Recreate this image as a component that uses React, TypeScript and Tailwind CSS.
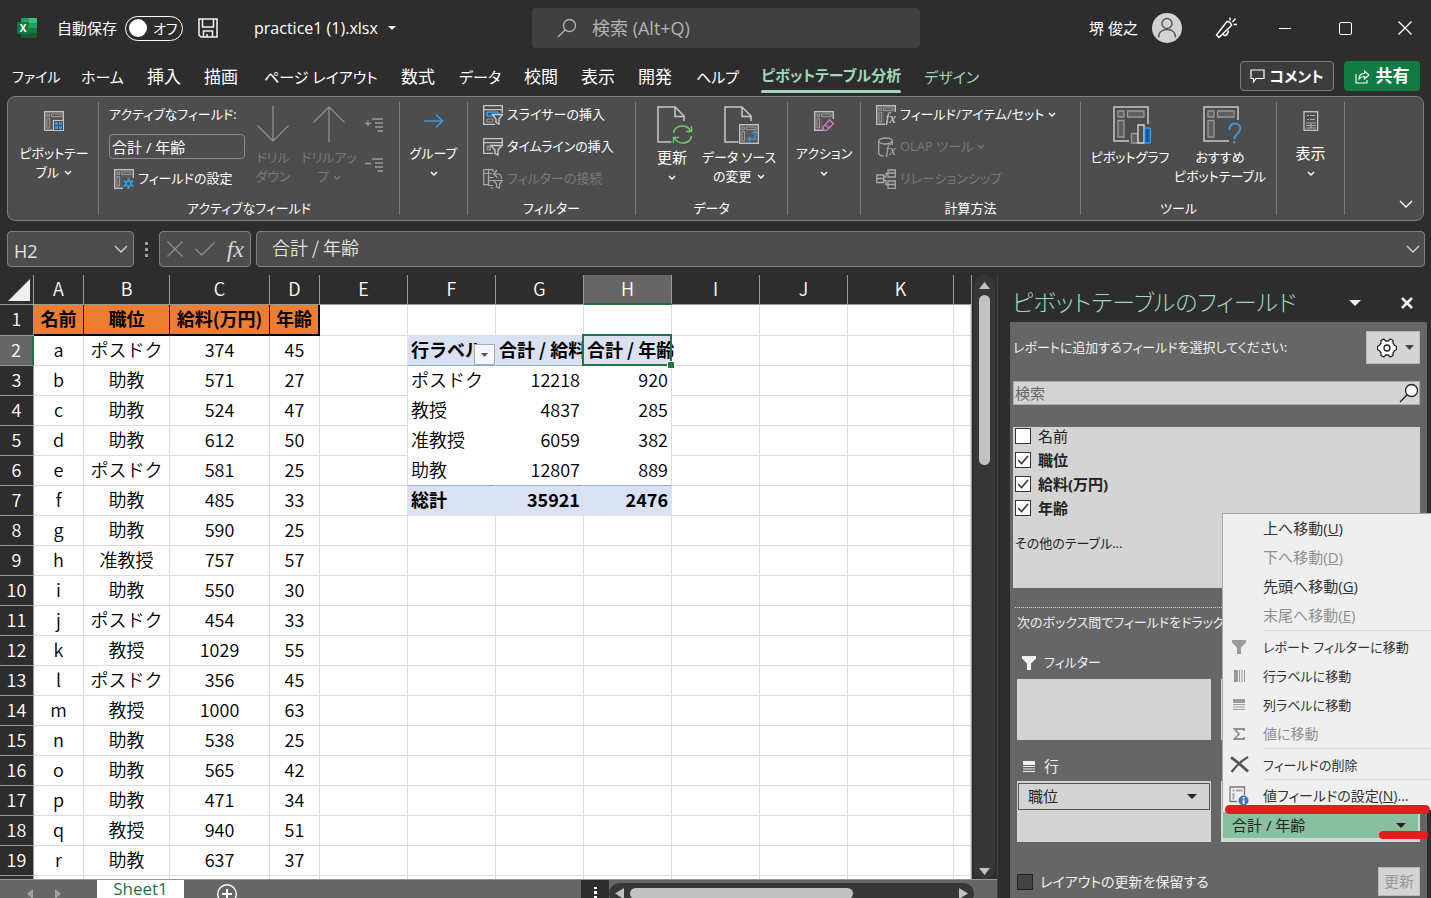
import type { ReactNode } from "react";

const SHEET_FONT = "font-['Noto_Sans_CJK_JP',sans-serif]";

/* ---------- icons ---------- */

function Chevron({ className = "" }: { className?: string }) {
  return (
    <svg width="8" height="6" viewBox="0 0 8 6" fill="none" className={`inline-block shrink-0 ${className}`}>
      <path d="M1 1l3 3 3-3" stroke="currentColor" strokeWidth="1.4" />
    </svg>
  );
}

function WideChevron() {
  return (
    <svg width="14" height="8" viewBox="0 0 14 8" fill="none">
      <path d="M1 1l6 6 6-6" stroke="currentColor" strokeWidth="1.3" />
    </svg>
  );
}

function Triangle({ w = 10, h = 5 }: { w?: number; h?: number }) {
  return (
    <svg width={w} height={h} viewBox="0 0 10 5" preserveAspectRatio="none">
      <path d="M0 0h10L5 5z" fill="currentColor" />
    </svg>
  );
}

function ExcelLogo() {
  return (
    <svg width="20" height="20" viewBox="0 0 20 20">
      <path d="M5 0h14a1 1 0 0 1 1 1v4H4V1a1 1 0 0 1 1-1z" fill="#21a366" />
      <path d="M12 0h7a1 1 0 0 1 1 1v4h-8z" fill="#33c481" />
      <path d="M4 5h8v5H4z" fill="#107c41" />
      <path d="M12 5h8v5h-8z" fill="#21a366" />
      <path d="M4 10h8v5H4zM4 15h16v4a1 1 0 0 1-1 1H5a1 1 0 0 1-1-1z" fill="#185c37" />
      <path d="M12 10h8v5h-8z" fill="#107c41" />
      <rect x="0" y="4" width="12" height="12" rx="1" fill="#107c41" />
      <text x="6" y="13.6" fontSize="10" fontWeight="700" textAnchor="middle" fill="#fff" fontFamily="Open Sans, sans-serif">X</text>
    </svg>
  );
}

function SaveIcon() {
  return (
    <svg width="20" height="20" viewBox="0 0 20 20" fill="none" stroke="#f4f4f4" strokeWidth="1.5">
      <path d="M1 1h18v18H3l-2-2zM4.500 1v8h11V1M5.500 19v-6h9v6M9 19v-3" />
    </svg>
  );
}

function Magnifier({ size = 20, fill = "none" }: { size?: number; fill?: string }) {
  return (
    <svg width={size} height={size} viewBox="0 0 20 20" fill="none" stroke="currentColor" strokeWidth="1.3">
      <circle cx="12.500" cy="7.500" r="6" fill={fill} />
      <path d="M8.200 11.800L1 19" />
    </svg>
  );
}

function PivotBase() {
  return (
    <>
      <rect x=".7" y=".7" width="18.600" height="18.600" fill="#5a5a5a" stroke="#c8c8c8" strokeWidth="1.3" />
      <path d="M3 3h2.500v2.500H3zM7.500 3H17v2.500H7.500zM3 7.500h2.500V17H3z" stroke="#9a9a9a" fill="none" />
    </>
  );
}

function PivotIcon({ children }: { children?: ReactNode }) {
  return (
    <svg width="20" height="20" viewBox="0 0 20 20" className="shrink-0">
      <PivotBase />
      {children}
    </svg>
  );
}

function PivotTableIcon() {
  return (
    <PivotIcon>
      <rect x="9.500" y="9.500" width="10" height="10" fill="#4d4d4d" stroke="#c8c8c8" />
      <path d="M11 11h3v3h-3zM15 11h3v3h-3zM11 15h3v3h-3zM15 15h3v3h-3z" fill="#3a96dd" />
    </PivotIcon>
  );
}

function FieldSettingsIcon() {
  return (
    <PivotIcon>
      <rect x="9" y="9" width="11" height="11" fill="#4d4d4d" />
      <g stroke="#3a96dd" strokeWidth="2.200">
        <path d="M14.500 9v11M9.700 11.800l9.600 5.500M9.700 17.300l9.600-5.500" />
      </g>
      <circle cx="14.500" cy="14.500" r="3.300" fill="#3a96dd" />
      <circle cx="14.500" cy="14.500" r="1.500" fill="#4d4d4d" />
    </PivotIcon>
  );
}

function EraserPivotIcon() {
  return (
    <PivotIcon>
      <rect x="9" y="8" width="11" height="12" fill="#4d4d4d" />
      <path d="M8.500 16.500l7-7.500 4 3.500-7 7H10z" fill="#4d4d4d" stroke="#d479d4" strokeWidth="1.400" />
      <path d="M11.300 13.800l4 3.500" stroke="#d479d4" strokeWidth="1.400" />
    </PivotIcon>
  );
}

function SlicerIcon() {
  return (
    <svg width="20" height="20" viewBox="0 0 20 20" fill="none" className="shrink-0">
      <path d="M.7.700h18.600v4H.7zM.7 4.700v14.600H12M19.300 4.700V8" stroke="#c8c8c8" strokeWidth="1.300" />
      <path d="M4 7h11v4H4z" fill="#0063b1" stroke="#69afe5" />
      <path d="M4 14h6v3H4z" stroke="#9a9a9a" />
      <path d="M9.500 9.500h10l-3.500 4.500v5l-3-1.500V14z" fill="#4d4d4d" stroke="#d0d0d0" strokeWidth="1.300" />
    </svg>
  );
}

function TimelineIcon() {
  return (
    <svg width="20" height="20" viewBox="0 0 20 20" fill="none" className="shrink-0">
      <path d="M.7 1.700h18.600v4H.7zM.7 5.700v10.600H10M19.300 5.700V9" stroke="#c8c8c8" strokeWidth="1.300" />
      <path d="M4 9h3.500v4H4z" stroke="#9a9a9a" fill="#777" />
      <path d="M8 8.500h11l-4 4.500v5l-3-1.500V13z" fill="#4d4d4d" stroke="#d0d0d0" strokeWidth="1.300" />
    </svg>
  );
}

function FilterLinkIcon() {
  return (
    <svg width="20" height="20" viewBox="0 0 20 20" fill="none" stroke="#a8a8a8" strokeWidth="1.200" className="shrink-0">
      <path d="M10 3V.700H.700v15H5M.700 4.500H9M5.500.700v15" />
      <path d="M5.500 8.500h5M5.500 8.500v8h4.500M5.500 11.500h4M7.500 19h3" />
      <path d="M10.500 5l3.500-4M10.500 5l4 3.500M10.500 5h4c3 0 4 2 4 5" />
      <path d="M10.500 11.500h9l-3 3.500v4l-3-1v-3z" fill="#4d4d4d" />
    </svg>
  );
}

function PageShape() {
  return <path d="M14.500 36H1V1h17l9 9v5M18 1v9.500h9" stroke="#c8c8c8" strokeWidth="1.500" fill="none" />;
}

function RefreshIcon() {
  return (
    <svg width="36" height="38" viewBox="0 0 36 38" fill="none">
      <PageShape />
      <path d="M16.500 27c1-5 5-7 9-7 3.500 0 6.500 2 8 5M34.500 20v5.500H29M34.500 30c-1 5-5 7-9 7-3.500 0-6.500-2-8-5M16.500 37v-5.500H22" stroke="#6ccb6c" strokeWidth="1.500" />
    </svg>
  );
}

function DataSourceIcon() {
  return (
    <svg width="36" height="38" viewBox="0 0 36 38" fill="none">
      <PageShape />
      <g transform="translate(15 18)">
        <PivotBase />
        <path d="M9 15h7V8M13.500 9.500L16 7l2.500 2.500M11.500 12.500L9 15l2.500 2.500" stroke="#3a96dd" strokeWidth="1.400" fill="none" />
      </g>
    </svg>
  );
}

function PivotChartIcon() {
  return (
    <svg width="38" height="38" viewBox="0 0 38 38">
      <path d="M16 35H1V1h34v17" stroke="#c8c8c8" strokeWidth="1.500" fill="none" />
      <path d="M5 5h6v6H5zM14.500 5H31v6H14.500zM5 14.500h6V31H5z" stroke="#9a9a9a" strokeWidth="1.300" fill="#5f5f5f" />
      <path d="M18.500 27.500H25V37h-6.500z" fill="#5f5f5f" stroke="#9a9a9a" strokeWidth="1.300" />
      <path d="M25 19h6v18h-6z" fill="#4d4d4d" stroke="#d8d8d8" strokeWidth="1.300" />
      <path d="M31.700 22h5.600v15h-5.600z" fill="#0063b1" stroke="#69afe5" />
    </svg>
  );
}

function RecommendedPivotIcon() {
  return (
    <svg width="38" height="38" viewBox="0 0 38 38" fill="none">
      <path d="M26 35H1V1h34v13" stroke="#c8c8c8" strokeWidth="1.500" />
      <path d="M5 5h6v6H5zM14.500 5H31v6H14.500zM5 14.500h6V31H5z" stroke="#9a9a9a" strokeWidth="1.300" fill="#5f5f5f" />
      <path d="M26.500 24c0-4 2-6.500 5.500-6.500s5.300 2.500 5.300 5c0 5-6 5-6 11" stroke="#3a96dd" strokeWidth="2" />
      <path d="M30.200 35h2.200v2.500h-2.200z" fill="#3a96dd" />
    </svg>
  );
}

function CalcFieldIcon() {
  return (
    <PivotIcon>
      <rect x="9" y="7" width="11" height="13" fill="#4d4d4d" />
      <text x="9.500" y="17.500" fontSize="14" fontStyle="italic" fill="#d8d8d8" fontFamily="Liberation Serif, serif">fx</text>
    </PivotIcon>
  );
}

function OlapIcon() {
  return (
    <svg width="20" height="20" viewBox="0 0 20 20" fill="none" className="shrink-0">
      <path d="M2.700 4v12.500c0 1.500 3 2.500 5 2.500M16.300 4v4" stroke="#a8a8a8" strokeWidth="1.300" />
      <ellipse cx="9.500" cy="4" rx="6.800" ry="3" stroke="#a8a8a8" strokeWidth="1.300" />
      <text x="9.500" y="17.500" fontSize="14" fontStyle="italic" fill="#b0b0b0" fontFamily="Liberation Serif, serif">fx</text>
    </svg>
  );
}

function RelationIcon() {
  return (
    <svg width="20" height="20" viewBox="0 0 20 20" fill="none" stroke="#a8a8a8" strokeWidth="1.300" className="shrink-0">
      <path d="M.7 6h7v7.500h-7zM12 1h7.300v7H12zM12 12h7.300v7.300H12zM.7 9.500h7M12 4h7.300M12 15.500h7.300M7.700 8H10V4.500h2M7.700 11.500H10v4h2" />
    </svg>
  );
}

function ArrowBig({ up = false }: { up?: boolean }) {
  return (
    <svg width="32" height="36" viewBox="0 0 32 36" fill="none" stroke="#8a8a8a" strokeWidth="1.400" className={up ? "rotate-180" : ""}>
      <path d="M16 0v35M.5 19.500L16 35l15.500-15.500" />
    </svg>
  );
}

function IndentIcon({ plus = false }: { plus?: boolean }) {
  return (
    <svg width="18" height="14" viewBox="0 0 18 14" fill="none" stroke="#9a9a9a" strokeWidth="1.300">
      <path d="M7 1h11M10 5h8M10 9h8M12.500 13H18M0 5.500h6" />
      {plus && <path d="M3 2.500v6" />}
    </svg>
  );
}

function ArrowRight() {
  return (
    <svg width="20" height="14" viewBox="0 0 20 14" fill="none" stroke="#3a96dd" strokeWidth="1.600">
      <path d="M0 7h18.500M12 .5L18.500 7 12 13.500" />
    </svg>
  );
}

function DisplayIcon() {
  return (
    <svg width="16" height="20" viewBox="0 0 16 20" fill="none">
      <rect x="1" y=".7" width="13.600" height="18.600" stroke="#c8c8c8" strokeWidth="1.300" />
      <path d="M4 4.500h2M7 4.500h5M4 8.500h2M7 8.500h5M3 12h10M3 14.500h10M3 17h10M8 12v5" stroke="#b0b0b0" strokeWidth="1.100" />
    </svg>
  );
}

function PenIcon() {
  return (
    <svg width="22" height="22" viewBox="0 0 22 22" fill="none" stroke="#fff" strokeWidth="1.400">
      <path d="M1.500 18L12 4.500c2 0 4 1.500 4.500 4L4 20.500zM8 17c1.500 2.500 4.500 2 5.500-3.500M15 3.500V.500M17.500 5l3-3.500M18.500 7.500H22" />
    </svg>
  );
}

function PersonIcon() {
  return (
    <svg width="20" height="22" viewBox="0 0 20 22" fill="none" stroke="#555" strokeWidth="1.500">
      <circle cx="10" cy="6.500" r="5" />
      <path d="M1.500 20.500c0-5 3.500-8 8.500-8s8.500 3 8.500 8" />
    </svg>
  );
}

function GearIcon() {
  return (
    <svg width="20" height="20" viewBox="0 0 20 20" fill="#fff" stroke="#222" strokeWidth="1.300" strokeLinejoin="round">
      <path d="M6 1.200l1.500.3L8.500 3h3l1-1.500 1.500-.3 2 1.300v2.300L17.500 7.300l2 1.200v3l-2 1.200-1.500 2.500v2.300l-2 1.300-1.500-.3-1-1.500h-3l-1 1.500-1.500.3-2-1.300v-2.300l-1.500-2.500-2-1.200v-3l2-1.200L4 4.800V2.500z" />
      <circle cx="10" cy="10" r="3" />
    </svg>
  );
}

function FunnelSolid() {
  return (
    <svg width="14" height="14" viewBox="0 0 14 14" fill="currentColor">
      <path d="M0 0h14v2.500L9 7.500V14H5V7.500L0 2.500z" />
    </svg>
  );
}

function RowsIcon() {
  return (
    <svg width="12" height="11" viewBox="0 0 12 11" fill="currentColor">
      <path d="M0 0h12v4H0zM0 5h12v1H0zM0 7.500h12v1H0zM0 10h12v1H0z" />
    </svg>
  );
}

function ColumnsIcon() {
  return (
    <svg width="11" height="12" viewBox="0 0 11 12" fill="currentColor">
      <path d="M0 0h4v12H0zM5 0h1v12H5zM7.500 0h1v12h-1zM10 0h1v12h-1z" />
    </svg>
  );
}

function SigmaIcon() {
  return (
    <svg width="12" height="12" viewBox="0 0 12 12" fill="none" stroke="currentColor" strokeWidth="1.800">
      <path d="M11 3V1H1.500L6 6l-4.500 5H11V9" />
    </svg>
  );
}

function DeleteIcon() {
  return (
    <svg width="19" height="17" viewBox="0 0 19 17" fill="none" stroke="#555">
      <path d="M1 1.500C6 4.500 12 10 18 15.500" strokeWidth="2.800" />
      <path d="M18 1C12 4.500 6 10 1.500 16" strokeWidth="2.200" />
    </svg>
  );
}

function ValueSettingsIcon() {
  return (
    <svg width="20" height="20" viewBox="0 0 20 20" fill="none">
      <path d="M8 15.500H1V1h14.500v8" stroke="#777" strokeWidth="1.300" />
      <path d="M3.500 3.500h2v2h-2zM7 3.500h6.500v2H7zM3.500 7h2v6.500h-2z" fill="#aaa" />
      <circle cx="14.500" cy="14.500" r="5" fill="#3f76b5" />
      <path d="M13.700 11h1.800v1.500h-1.800zM13.700 13.500h1.800v4.500h-1.800z" fill="#fff" />
    </svg>
  );
}

/* ---------- title bar and tabs ---------- */

function TitleBar() {
  return (
    <header className="grid h-14 shrink-0 grid-cols-[532px_1fr_511px] items-center">
      <div className="flex items-center pl-[17px]">
        <ExcelLogo />
        <span className="ml-5 text-[15px]">自動保存</span>
        <button type="button" role="switch" aria-checked="false" className="ml-2 flex h-[25px] w-[58px] items-center rounded-full border-[1.5px] border-white pl-[3px] text-[14px]">
          <span className="h-[18px] w-[18px] rounded-full bg-white" />
          <span className="ml-1.5">オフ</span>
        </button>
        <button type="button" aria-label="保存" className="ml-[15px]"><SaveIcon /></button>
        <button type="button" className="ml-9 flex items-center gap-2.5 text-[16px]">
          practice1 (1).xlsx
          <Triangle w={8} h={4} />
        </button>
      </div>
      <label className="flex h-10 items-center gap-[15px] rounded bg-[#404040] pl-[25px] text-[#b4b4b4]">
        <Magnifier />
        <input placeholder="検索 (Alt+Q)" aria-label="検索" className="min-w-0 flex-1 bg-transparent text-[18px] outline-none placeholder:text-[#b4b4b4]" />
      </label>
      <div className="flex items-center justify-end">
        <span className="text-[15px]">堺 俊之</span>
        <button type="button" aria-label="アカウント" className="ml-3.5 mr-[15px] grid h-[30px] w-[30px] place-items-center rounded-full bg-[#d2d2d2]"><PersonIcon /></button>
        <button type="button" aria-label="ペン" className="grid w-[58px] place-items-center"><PenIcon /></button>
        <button type="button" aria-label="最小化" className="grid h-10 w-[60px] place-items-center"><span className="h-px w-3 bg-white" /></button>
        <button type="button" aria-label="最大化" className="grid h-10 w-[60px] place-items-center"><span className="h-[13px] w-[13px] rounded-xs border-[1.5px] border-white" /></button>
        <button type="button" aria-label="閉じる" className="grid h-10 w-14 place-items-center pl-1">
          <svg width="14" height="14" viewBox="0 0 14 14" stroke="#fff" strokeWidth="1.400"><path d="M.5.500l13 13M13.500.500l-13 13" /></svg>
        </button>
      </div>
    </header>
  );
}

const tabs = [
  { label: "ファイル", style: "w-[69px] text-[14px]" },
  { label: "ホーム", style: "w-[66px] text-[15px]" },
  { label: "挿入", style: "w-[57px] text-[17px]" },
  { label: "描画", style: "w-[60px] text-[17px]" },
  { label: "ページ レイアウト", style: "w-[137px] text-[15px]" },
  { label: "数式", style: "w-[58px] text-[17px]" },
  { label: "データ", style: "w-[65px] text-[15px]" },
  { label: "校閲", style: "w-[57px] text-[17px]" },
  { label: "表示", style: "w-[57px] text-[17px]" },
  { label: "開発", style: "w-[58px] text-[17px]" },
  { label: "ヘルプ", style: "w-[65px] text-[15px]" },
];

function Tabs() {
  return (
    <nav className="flex h-10 shrink-0 items-center pl-3 pr-[11px] text-[15px] leading-6 whitespace-nowrap">
      {tabs.map((t) => (
        <a key={t.label} href="#" className={`${t.style} shrink-0 pt-0.5`}>{t.label}</a>
      ))}
      <a href="#" className="mr-[23px] flex h-[34px] flex-col justify-between pt-1 font-bold text-[#9fd8b9]">
        ピボットテーブル分析
        <span className="h-[3px] rounded-full bg-[#9fd8b9]" />
      </a>
      <a href="#" className="pt-0.5 text-[#9fd8b9]">デザイン</a>
      <div className="ml-auto flex gap-2.5 font-bold">
        <button type="button" className="flex h-[30px] w-[94px] items-center justify-center gap-1 rounded border border-[#808080] bg-[#3c3c3c] text-[15px]">
          <svg width="15" height="14" viewBox="0 0 15 14" fill="none" stroke="#fff" strokeWidth="1.200"><path d="M1 1h13v8.500H6L3.500 13V9.500H1z" /></svg>
          コメント
        </button>
        <button type="button" className="flex h-[30px] w-[76px] items-center justify-center gap-1.5 rounded bg-[#107c41] text-[17px]">
          <svg width="15" height="15" viewBox="0 0 15 15" fill="none" stroke="#fff" strokeWidth="1.100"><path d="M1 5v9h11v-3M4 10c0-4 2-5.500 5.500-5.500V2L14 6l-4.500 4V7.500C7 7.500 5.500 8 4 10z" /></svg>
          共有
        </button>
      </div>
    </nav>
  );
}

/* ---------- ribbon ---------- */

function Group({ label, width, children }: { label?: string; width: string; children: ReactNode }) {
  return (
    <section className={`${width} my-[5px] flex shrink-0 flex-col border-r border-[#7a7a7a]`}>
      <div className="flex flex-1">{children}</div>
      <div className="h-3.5 text-center text-[13px] leading-[14px]">{label}</div>
    </section>
  );
}

function SmallIconButton({ icon, children, width }: { icon: ReactNode; children: ReactNode; width: string }) {
  return (
    <button type="button" className={`${width} flex flex-col items-center text-center text-[13px] leading-[19px]`}>
      <span className="mb-1 grid h-[38px] place-items-center">{icon}</span>
      {children}
    </button>
  );
}

function LargeIconButton({ icon, children, width, disabled }: { icon: ReactNode; children: ReactNode; width: string; disabled?: boolean }) {
  return (
    <button type="button" disabled={disabled} className={`${width} flex shrink-0 flex-col items-center pt-1 text-center text-[13px] leading-[19px] disabled:text-[#787878]`}>
      <span className="mb-1 flex h-[38px] items-start">{icon}</span>
      {children}
    </button>
  );
}

function Command({ icon, children, disabled }: { icon: ReactNode; children: ReactNode; disabled?: boolean }) {
  return (
    <button type="button" disabled={disabled} className="flex h-5 items-center gap-1 text-[13px] disabled:text-[#787878]">
      {icon}
      {children}
    </button>
  );
}

function Ribbon() {
  return (
    <div className="mx-[7px] flex h-[125px] shrink-0 overflow-hidden rounded-lg border border-[#808080] bg-[#4d4d4d] whitespace-nowrap">
      <Group width="w-[91px]">
        <SmallIconButton width="w-full pl-0.5" icon={<PivotTableIcon />}>
          <span>ピボットテー</span>
          <span>ブル <Chevron className="mb-0.5 ml-0.5" /></span>
        </SmallIconButton>
      </Group>
      <Group width="w-[301px]" label="アクティブなフィールド">
        <div className="ml-2.5 flex w-[136px] shrink-0 flex-col pt-[3px] text-[13px]">
          <label htmlFor="active-field" className="h-5">アクティブなフィールド:</label>
          <input id="active-field" defaultValue="合計 / 年齢" className="mt-[9px] h-[25px] w-full rounded border border-[#8a8a8a] bg-transparent px-0.5 text-[15px] outline-none" />
          <div className="mt-2.5 pl-[5px]">
            <Command icon={<FieldSettingsIcon />}>フィールドの設定</Command>
          </div>
        </div>
        <LargeIconButton disabled width="w-[56px]" icon={<ArrowBig />}>
          <span>ドリル</span>
          <span>ダウン</span>
        </LargeIconButton>
        <LargeIconButton disabled width="w-[56px]" icon={<ArrowBig up />}>
          <span>ドリルアッ</span>
          <span>プ <Chevron /></span>
        </LargeIconButton>
        <div className="ml-2 flex flex-col gap-[26px] pt-4">
          <button type="button" aria-label="展開"><IndentIcon plus /></button>
          <button type="button" aria-label="折りたたみ"><IndentIcon /></button>
        </div>
      </Group>
      <Group width="w-[68px]">
        <SmallIconButton width="w-full" icon={<ArrowRight />}>
          <span>グループ</span>
          <Chevron className="mt-2" />
        </SmallIconButton>
      </Group>
      <Group width="w-[168px]" label="フィルター">
        <div className="flex flex-col gap-3 pl-[15px] pt-[3px]">
          <Command icon={<SlicerIcon />}>スライサーの挿入</Command>
          <Command icon={<TimelineIcon />}>タイムラインの挿入</Command>
          <Command disabled icon={<FilterLinkIcon />}>フィルターの接続</Command>
        </div>
      </Group>
      <Group width="w-[152px]" label="データ">
        <LargeIconButton width="w-[72px]" icon={<span className="pl-1.5"><RefreshIcon /></span>}>
          <span className="text-[15px]">更新</span>
          <Chevron className="mt-2" />
        </LargeIconButton>
        <LargeIconButton width="w-[62px]" icon={<span className="pl-1.5"><DataSourceIcon /></span>}>
          <span>データ ソース</span>
          <span>の変更 <Chevron className="mb-0.5 ml-0.5" /></span>
        </LargeIconButton>
      </Group>
      <Group width="w-[73px]">
        <SmallIconButton width="w-full" icon={<EraserPivotIcon />}>
          <span>アクション</span>
          <Chevron className="mt-2" />
        </SmallIconButton>
      </Group>
      <Group width="w-[220px]" label="計算方法">
        <div className="flex flex-col gap-3 pl-[15px] pt-[3px]">
          <Command icon={<CalcFieldIcon />}>フィールド/アイテム/セット <Chevron /></Command>
          <Command disabled icon={<OlapIcon />}>OLAP ツール <Chevron /></Command>
          <Command disabled icon={<RelationIcon />}>リレーションシップ</Command>
        </div>
      </Group>
      <Group width="w-[196px]" label="ツール">
        <LargeIconButton width="w-[98px]" icon={<span className="pl-1"><PivotChartIcon /></span>}>
          <span>ピボットグラフ</span>
        </LargeIconButton>
        <LargeIconButton width="w-[82px]" icon={<span className="pl-1"><RecommendedPivotIcon /></span>}>
          <span>おすすめ</span>
          <span>ピボットテーブル</span>
        </LargeIconButton>
      </Group>
      <Group width="w-[68px]">
        <SmallIconButton width="w-full" icon={<DisplayIcon />}>
          <span className="text-[15px]">表示</span>
          <Chevron className="mt-2" />
        </SmallIconButton>
      </Group>
      <button type="button" aria-label="リボンを折りたたむ" className="ml-auto mr-[10px] mb-3 self-end"><WideChevron /></button>
    </div>
  );
}

function FormulaBar() {
  return (
    <div className="mr-1.5 my-2.5 ml-[7px] flex h-9 shrink-0 items-stretch text-[#d8d8d8]">
      <div className="flex w-[127px] items-center rounded border border-[#808080] bg-[#4d4d4d] pl-1.5 pr-[5px]">
        <input aria-label="名前ボックス" defaultValue="H2" className="min-w-0 flex-1 bg-transparent pt-1 text-[18px] text-[#e4e4e4] outline-none" />
        <button type="button" aria-label="名前の一覧"><WideChevron /></button>
      </div>
      <div className="grid w-[25px] place-content-center gap-[3px]">
        <span className="h-[3px] w-[3px] bg-[#a0a0a0]" />
        <span className="h-[3px] w-[3px] bg-[#a0a0a0]" />
        <span className="h-[3px] w-[3px] bg-[#a0a0a0]" />
      </div>
      <div className="flex w-[92px] items-center justify-between rounded border border-[#808080] bg-[#4d4d4d] pl-[7px] pr-1.5">
        <button type="button" aria-label="キャンセル">
          <svg width="16" height="16" viewBox="0 0 16 16" stroke="#8c8c8c" strokeWidth="1.400"><path d="M.5.500l15 15M15.500.500l-15 15" /></svg>
        </button>
        <button type="button" aria-label="入力">
          <svg width="20" height="14" viewBox="0 0 20 14" fill="none" stroke="#8c8c8c" strokeWidth="1.400"><path d="M.5 7l6 6L19.500.500" /></svg>
        </button>
        <button type="button" className="font-['Liberation_Serif',serif] text-[24px] leading-8 italic">fx</button>
      </div>
      <div className="ml-[5px] flex flex-1 items-center rounded border border-[#808080] bg-[#4d4d4d] pl-[15px] pr-1">
        <input aria-label="数式バー" defaultValue="合計 / 年齢" className={`mb-1 min-w-0 flex-1 bg-transparent text-[18px] text-[#e4e4e4] outline-none [font-feature-settings:normal] [font-weight:350] ${SHEET_FONT}`} />
        <button type="button" aria-label="数式バーの展開"><WideChevron /></button>
      </div>
    </div>
  );
}

/* ---------- worksheet ---------- */

const columns = [
  { name: "A", width: "w-[50px]" },
  { name: "B", width: "w-[86px]" },
  { name: "C", width: "w-[100px]" },
  { name: "D", width: "w-[50px]" },
  { name: "E", width: "w-[88px]" },
  { name: "F", width: "w-[88px]" },
  { name: "G", width: "w-[88px]" },
  { name: "H", width: "w-[88px]" },
  { name: "I", width: "w-[88px]" },
  { name: "J", width: "w-[88px]" },
  { name: "K", width: "w-[106px]" },
  { name: "", width: "" },
];

const people: string[][] = [
  ["名前", "職位", "給料(万円)", "年齢"],
  ["a", "ポスドク", "374", "45"],
  ["b", "助教", "571", "27"],
  ["c", "助教", "524", "47"],
  ["d", "助教", "612", "50"],
  ["e", "ポスドク", "581", "25"],
  ["f", "助教", "485", "33"],
  ["g", "助教", "590", "25"],
  ["h", "准教授", "757", "57"],
  ["i", "助教", "550", "30"],
  ["j", "ポスドク", "454", "33"],
  ["k", "教授", "1029", "55"],
  ["l", "ポスドク", "356", "45"],
  ["m", "教授", "1000", "63"],
  ["n", "助教", "538", "25"],
  ["o", "助教", "565", "42"],
  ["p", "助教", "471", "34"],
  ["q", "教授", "940", "51"],
  ["r", "助教", "637", "37"],
  ["", "", "", ""],
];

const pivot: Record<number, string[]> = {
  2: ["行ラベル", "合計 / 給料", "合計 / 年齢"],
  3: ["ポスドク", "12218", "920"],
  4: ["教授", "4837", "285"],
  5: ["准教授", "6059", "382"],
  6: ["助教", "12807", "889"],
  7: ["総計", "35921", "2476"],
};

function cellClass(row: number, col: number) {
  if (row === 1 && col < 4) {
    return `bg-[#ed7d31] font-bold text-center border-b-2 border-black ${col === 3 ? "border-r-2" : "border-r"}`;
  }
  if (col < 4) return "border-r border-b border-[#dcdcdc] text-center";
  const filled = row === 2 || row === 7;
  if (col === 4 && filled) return "border-r border-b border-b-[#dcdcdc] border-r-[#d9e1f2]";
  if (col >= 5 && col <= 7 && row >= 2 && row <= 7) {
    const edge = filled ? "border-r-[#d9e1f2]" : col === 7 ? "border-r-[#dcdcdc]" : "border-r-white";
    const base = row === 2 || row === 6 ? "border-b-[#8ea9db]" : row === 7 ? "border-b-[#d9e1f2]" : "border-b-white";
    const fill = filled ? "bg-[#d9e1f2] font-bold" : "";
    const align = row > 2 && col > 5 ? "text-right pr-[3px]" : "text-left pl-[3px]";
    return `border-r border-b ${edge} ${base} ${fill} ${align}`;
  }
  return "border-r border-b border-[#dcdcdc]";
}

function PivotCell({ row, col }: { row: number; col: number }) {
  const text = pivot[row][col - 5];
  if (row === 2 && col === 5) {
    return (
      <div className="relative h-[29px] overflow-hidden">
        {text}
        <button type="button" aria-label="行ラベルのフィルター" className="absolute right-0 bottom-0 grid h-[21px] w-[21px] place-items-center border border-[#a8acb3] bg-[#f4f6f9] text-[#555]">
          <Triangle w={7} h={4} />
        </button>
      </div>
    );
  }
  if (row === 2 && col === 7) {
    return (
      <>
        {text}
        <span className="absolute -top-0.5 -right-px -bottom-px -left-0.5 z-10 border-2 border-[#217346]" />
        <span className="absolute -right-[3px] -bottom-[3px] z-10 h-1.5 w-1.5 bg-[#217346] outline outline-white" />
      </>
    );
  }
  return <div className="overflow-hidden">{text}</div>;
}

function Worksheet() {
  return (
    <table className={`w-full table-fixed border-separate border-spacing-0 text-[18px] leading-[27px] [font-weight:350] whitespace-nowrap text-black ${SHEET_FONT}`}>
      <colgroup>
        <col className="w-[34px]" />
        {columns.map((c, i) => (
          <col key={i} className={c.width} />
        ))}
      </colgroup>
      <thead>
        <tr className="h-[30px] bg-[#2d2d2d] align-top text-white">
          <th className="border-r border-b border-[#9a9a9a] p-0">
            <svg width="22" height="22" viewBox="0 0 22 22" className="mt-1 ml-2"><path d="M22 0v22H0z" fill="#f0f0f0" /></svg>
          </th>
          {columns.map((c, i) => (
            <th key={i} scope="col" className={`border-r p-0 text-center align-top [font-weight:350] ${c.name === "H" ? "border-b-2 border-r-[#9a9a9a] border-b-[#217346] bg-[#666]" : "border-b border-[#9a9a9a]"} ${c.name === "" ? "border-r-0" : ""}`}>
              {c.name}
            </th>
          ))}
        </tr>
      </thead>
      <tbody>
        {people.map((person, r) => {
          const row = r + 1;
          return (
            <tr key={row} className={row === 1 ? "h-[31px]" : "h-[30px]"}>
              <th scope="row" className={`border-b border-b-[#9a9a9a] p-0 text-center align-top [font-weight:350] text-white ${row === 2 ? "border-r-2 border-r-[#217346] bg-[#666]" : "border-r border-r-[#9a9a9a] bg-[#2d2d2d]"}`}>
                {row < 20 ? row : ""}
              </th>
              {columns.map((_, col) => (
                <td key={col} className={`relative p-0 align-top ${cellClass(row, col)}`}>
                  {col < 4 ? person[col] : col >= 5 && col <= 7 && pivot[row] ? <PivotCell row={row} col={col} /> : null}
                </td>
              ))}
            </tr>
          );
        })}
      </tbody>
    </table>
  );
}

function VerticalScroll() {
  return (
    <div className="mr-0.5 ml-0.5 flex w-[21px] shrink-0 flex-col items-center rounded-full bg-[#373737] pt-[7px] pb-1 text-[#c2c2c2]">
      <span className="rotate-180"><Triangle w={11} h={7} /></span>
      <span className="mt-1.5 h-[170px] w-[11px] rounded-full bg-[#c2c2c2]" />
      <span className="mt-auto"><Triangle w={11} h={7} /></span>
    </div>
  );
}

function SheetBar() {
  return (
    <div className="flex h-[19px] shrink-0 items-start overflow-hidden border-t border-[#999] bg-[#666]">
      <div className="flex w-[97px] items-center justify-center gap-[22px] pt-[9px] pl-[15px] pr-6 text-[#a0a0a0]">
        <svg width="6" height="10" viewBox="0 0 6 10"><path d="M6 0v10L0 5z" fill="currentColor" /></svg>
        <svg width="6" height="10" viewBox="0 0 6 10"><path d="M0 0v10l6-5z" fill="currentColor" /></svg>
      </div>
      <button type="button" className="-mt-px h-[19px] w-[87px] bg-white text-[17px] leading-[19px] text-[#217346]">Sheet1</button>
      <button type="button" aria-label="新しいシート" className="ml-8 pt-[3px]">
        <svg width="22" height="22" viewBox="0 0 22 22" fill="none" stroke="#fff">
          <circle cx="11" cy="11" r="9.300" strokeWidth="1.400" />
          <path d="M11 6v10M6 11h10" strokeWidth="2" />
        </svg>
      </button>
      <div className="ml-auto flex h-[18px] w-7 flex-col items-center gap-0.5 bg-[#2d2d2d] pt-[7px]">
        <span className="h-[3px] w-[3px] bg-white" />
        <span className="h-[3px] w-[3px] bg-white" />
        <span className="h-[3px] w-[3px] bg-white" />
      </div>
      <div className="mt-[3px] mr-[23px] flex h-[21px] w-[365px] items-center rounded-full bg-[#373737] pr-1.5 pl-1.5 text-[#c2c2c2]">
        <svg width="9" height="11" viewBox="0 0 9 11"><path d="M9 0v11L0 5.500z" fill="currentColor" /></svg>
        <span className="ml-1.5 h-[11px] w-[223px] rounded-full bg-[#c2c2c2]" />
        <svg width="9" height="11" viewBox="0 0 9 11" className="ml-auto"><path d="M0 0v11l9-5.500z" fill="currentColor" /></svg>
      </div>
    </div>
  );
}

/* ---------- field pane ---------- */

const fields = [
  { name: "名前", checked: false },
  { name: "職位", checked: true },
  { name: "給料(万円)", checked: true },
  { name: "年齢", checked: true },
];

function FieldCheckbox({ name, checked }: { name: string; checked: boolean }) {
  return (
    <label className={`flex h-6 items-start gap-[7px] pl-0.5 leading-[17px] ${checked ? "font-bold" : ""}`}>
      <span className="grid h-4 w-4 place-items-center">
        <input type="checkbox" defaultChecked={checked} className="peer h-4 w-4 appearance-none border border-[#333] bg-white [grid-area:1/1]" />
        <svg width="12" height="10" viewBox="0 0 12 10" fill="none" stroke="#333" strokeWidth="1.600" className="pointer-events-none invisible [grid-area:1/1] peer-checked:visible">
          <path d="M1 5l3.500 3.500L11 1" />
        </svg>
      </span>
      {name}
    </label>
  );
}

function AreaTitle({ icon, children }: { icon: ReactNode; children: ReactNode }) {
  return (
    <div className="flex h-5 items-center gap-2 pl-[5px]">
      <span className="grid w-3.5 place-items-center">{icon}</span>
      {children}
    </div>
  );
}

function MenuItem({ icon, children, disabled }: { icon?: ReactNode; children: ReactNode; disabled?: boolean }) {
  return (
    <button type="button" role="menuitem" disabled={disabled} className="flex h-[29px] w-full items-center text-left disabled:text-[#8f8f8f]">
      <span className="grid w-8 shrink-0 place-items-center">{icon}</span>
      <span className="ml-2">{children}</span>
    </button>
  );
}

function FieldMenu() {
  const rule = <div className="ml-10 h-0.5 border-t border-[#d8dadd]" />;
  return (
    <div role="menu" className="absolute top-[238px] right-0 w-[209px] border-t border-l border-[#a8a8a8] bg-[#efefef] text-[15px] whitespace-nowrap text-[#333]">
      <MenuItem>上へ移動(<u>U</u>)</MenuItem>
      <MenuItem disabled>下へ移動(<u>D</u>)</MenuItem>
      <MenuItem>先頭へ移動(<u>G</u>)</MenuItem>
      <MenuItem disabled>末尾へ移動(<u>E</u>)</MenuItem>
      {rule}
      <div className="text-[#9a9a9a]">
        <MenuItem icon={<FunnelSolid />}><span className="text-[13px] text-[#333]">レポート フィルターに移動</span></MenuItem>
        <MenuItem icon={<ColumnsIcon />}><span className="text-[13px] text-[#333]">行ラベルに移動</span></MenuItem>
        <MenuItem icon={<RowsIcon />}><span className="text-[13px] text-[#333]">列ラベルに移動</span></MenuItem>
      </div>
      <MenuItem disabled icon={<SigmaIcon />}><span className="text-[14px]">値に移動</span></MenuItem>
      {rule}
      <MenuItem icon={<DeleteIcon />}><span className="text-[13px]">フィールドの削除</span></MenuItem>
      {rule}
      <MenuItem icon={<ValueSettingsIcon />}><span className="text-[14px]">値フィールドの設定(<u>N</u>)...</span></MenuItem>
      <span className="absolute right-px -bottom-1 left-0.5 h-[9px] rounded-full bg-[#e81c1c]" />
      <span className="absolute right-[3px] -bottom-[29px] h-2 w-[49px] rounded-full bg-[#e81c1c]" />
    </div>
  );
}

function FieldPane() {
  return (
    <aside className="relative flex w-[433px] shrink-0 flex-col overflow-hidden pr-1 pl-3 text-[13px] text-[#f0f0f0]">
      <div className="flex h-[47px] shrink-0 items-center pt-2 pl-0.5">
        <h2 className="text-[23px] font-light whitespace-nowrap text-[#9fd8b9]">ピボットテーブルのフィールド</h2>
        <button type="button" aria-label="作業ウィンドウのオプション" className="mr-10 ml-auto"><Triangle w={12} h={6} /></button>
        <button type="button" aria-label="閉じる" className="mr-3.5">
          <svg width="12" height="12" viewBox="0 0 12 12" stroke="#f0f0f0" strokeWidth="2.600"><path d="M1 1l10 10M11 1L1 11" /></svg>
        </button>
      </div>
      <div className="flex-1 bg-[#666] pt-[9px] pr-[7px] pl-[3px]">
        <div className="flex h-[33px] items-center justify-between">
          <span>レポートに追加するフィールドを選択してください:</span>
          <button type="button" aria-label="ツール" className="flex h-[33px] w-[54px] items-center justify-center gap-2 border border-[#bababa] bg-[#d4d4d4] pl-1 text-[#444]">
            <GearIcon />
            <Triangle w={9} h={5} />
          </button>
        </div>
        <label className="mt-[17px] flex h-6 items-center border border-[#ababab] bg-[#d4d4d4] pl-px text-[#222]">
          <input aria-label="フィールドの検索" placeholder="検索" className="min-w-0 flex-1 bg-transparent text-[15px] outline-none placeholder:text-[#666]" />
          <Magnifier fill="#fff" />
        </label>
        <div className="mt-[22px] h-[161px] bg-[#d4d4d4] pt-px text-[15px] leading-6 text-[#222]">
          {fields.map((f) => (
            <FieldCheckbox key={f.name} {...f} />
          ))}
          <a href="#" className="mt-[7px] block pl-0.5 text-[13px]">その他のテーブル...</a>
        </div>
        <div className="mt-[19px] ml-0.5 border-t border-dotted border-[#d4d4d4]" />
        <p className="mt-1 ml-1 h-5 leading-5 whitespace-nowrap">次のボックス間でフィールドをドラッグ</p>
        <div className="mt-[21px] ml-1 grid grid-cols-[194px_1fr] gap-x-2.5">
          <div>
            <AreaTitle icon={<FunnelSolid />}>フィルター</AreaTitle>
            <div className="mt-[6px] h-[61px] bg-[#d4d4d4]" />
          </div>
          <div className="pt-[26px]">
            <div className="h-[61px] bg-[#d4d4d4]" />
          </div>
          <div className="pt-4">
            <AreaTitle icon={<RowsIcon />}><span className="text-[15px]">行</span></AreaTitle>
            <div className="mt-[5px] h-[61px] bg-[#d4d4d4] p-px pt-0.5">
              <button type="button" className="flex h-[27px] w-full items-center justify-between border border-[#555] pr-3 pl-[9px] text-[15px] text-[#222]">
                職位
                <Triangle w={10} h={5} />
              </button>
            </div>
          </div>
          <div className="pt-[41px]">
            <div className="h-[61px] bg-[#d4d4d4] p-px pt-[30px]">
              <button type="button" className="flex h-7 w-full items-center justify-between border border-[#c4e4d1] bg-[#87bf9f] pr-3 pl-[9px] text-[15px] text-[#222]">
                合計 / 年齢
                <Triangle w={10} h={5} />
              </button>
            </div>
          </div>
        </div>
        <div className="mt-[25px] ml-1 flex h-[29px] items-center">
          <label className="flex items-center gap-[7px] text-[14px]">
            <input type="checkbox" className="h-4 w-4 appearance-none border border-[#222] bg-[#444]" />
            レイアウトの更新を保留する
          </label>
          <button type="button" disabled className="ml-auto h-[29px] w-[42px] border border-[#bababa] bg-[#d4d4d4] text-[15px] text-[#999]">更新</button>
        </div>
      </div>
      <FieldMenu />
    </aside>
  );
}

export default function App() {
  return (
    <div className="flex h-screen flex-col overflow-hidden bg-[#2d2d2d] font-['Open_Sans','Noto_Sans_CJK_JP',sans-serif] text-white [font-feature-settings:'palt']">
      <TitleBar />
      <Tabs />
      <Ribbon />
      <FormulaBar />
      <main className="-mt-0.5 flex min-h-0 flex-1">
        <div className="flex min-w-0 flex-1 flex-col border-r border-[#444]">
          <div className="flex min-h-0 flex-1">
            <div className="min-w-0 flex-1 overflow-hidden border-r border-[#9a9a9a] bg-white [font-feature-settings:normal]">
              <Worksheet />
            </div>
            <VerticalScroll />
          </div>
          <SheetBar />
        </div>
        <FieldPane />
      </main>
    </div>
  );
}
